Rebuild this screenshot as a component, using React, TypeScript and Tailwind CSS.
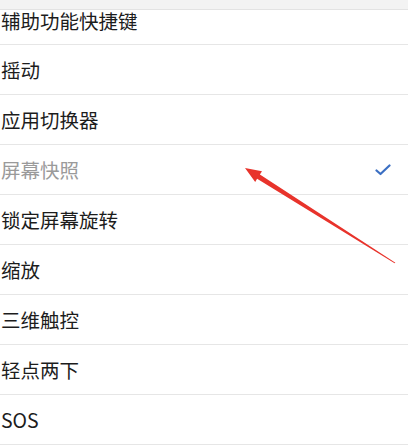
const items = [
  { label: "摇动" },
  { label: "应用切换器" },
  { label: "屏幕快照", checked: true },
  { label: "锁定屏幕旋转" },
  { label: "缩放" },
  { label: "三维触控" },
  { label: "轻点两下" },
  { label: "SOS" },
];

export default function App() {
  return (
    <div className="relative h-[448px] w-[408px] overflow-hidden bg-white font-['Noto_Sans_CJK_SC','Noto_Sans',sans-serif] text-[19.5px] text-[#1c1c1c]">
      <div className="h-[10px] border-b border-[#e3e3e3] bg-[#f3f3f3]" />
      <div className="flex h-[35px] items-start border-b-[1.5px] border-[#e6e6e6] pl-[1px] leading-none">
        <span className="-mt-[0px] pt-[1px]">辅助功能快捷键</span>
      </div>
      {items.map((item) => (
        <div
          key={item.label}
          className="flex h-[50px] items-center justify-between border-b-[1.5px] border-[#e6e6e6] pl-[1px] pr-[17px]"
        >
          <span className={item.checked ? "text-[#9a9a9a]" : ""}>{item.label}</span>
          {item.checked && (
            <svg width="16" height="12" viewBox="0 0 16 12" className="mt-[1px]">
              <polyline points="1.5,6.5 5.5,10 14.5,1.5" fill="none" stroke="#3b6fc3" strokeWidth="2.2" strokeLinecap="round" strokeLinejoin="round" />
            </svg>
          )}
        </div>
      ))}
      <svg className="pointer-events-none absolute left-0 top-0" width="408" height="448" viewBox="0 0 408 448">
        <polygon
          points="245,168 262,171.3 259.9,174.4 395.4,262.7 394.6,263.3 257.1,178.8 255.2,182"
          fill="#e8332b"
        />
      </svg>
    </div>
  );
}
